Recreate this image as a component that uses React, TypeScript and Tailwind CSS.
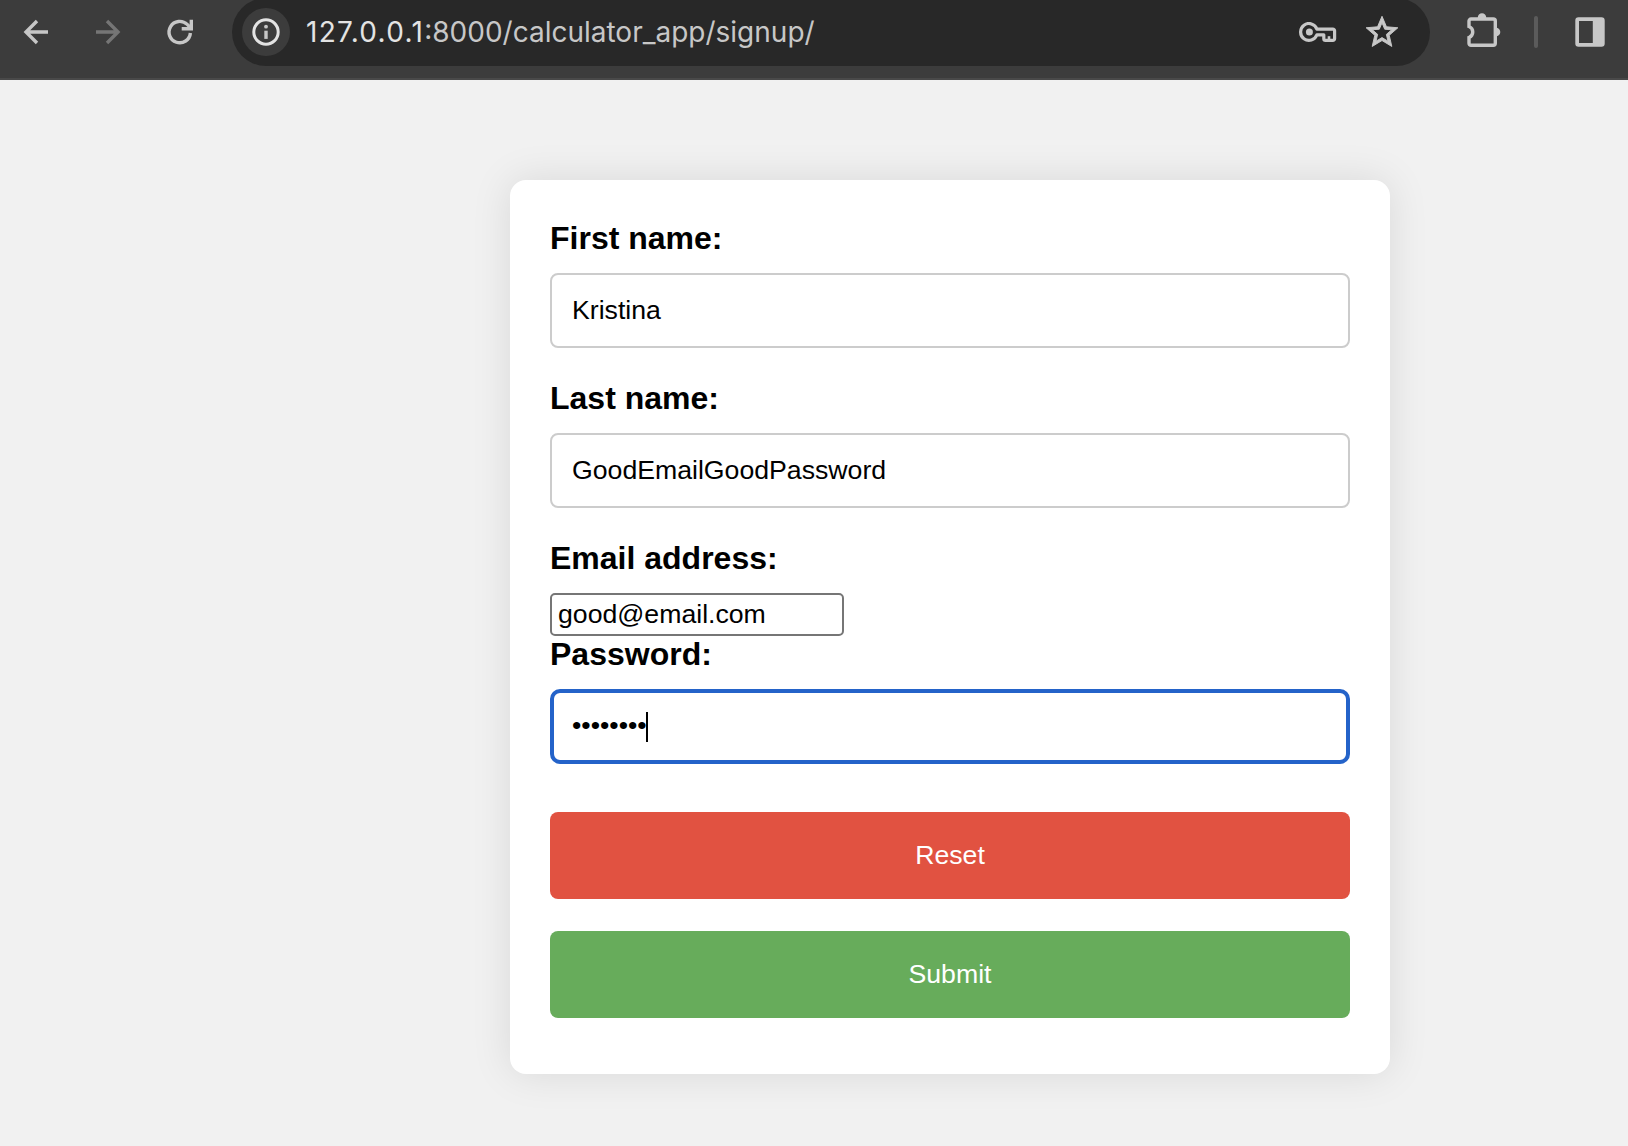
import type { ReactNode } from "react";

function BackIcon() {
  return (
    <svg className="h-9 w-9 shrink-0" viewBox="0 0 36 36" fill="none" stroke="currentColor" strokeWidth="3.4">
      <path d="M30 18H8.5M19 7 8 18l11 11" />
    </svg>
  );
}

function ReloadIcon() {
  return (
    <svg className="h-9 w-9 shrink-0" viewBox="0 0 36 36" fill="none" stroke="currentColor" strokeWidth="3.4">
      <path d="M28.4 19A10.7 10.7 0 1 1 25.2 10.4L29 14.2" />
      <path d="M29.3 5.8v9H19.7" />
    </svg>
  );
}

function InfoIcon() {
  return (
    <svg className="h-7 w-7" viewBox="0 0 28 28" fill="none">
      <circle cx="14" cy="14" r="12.2" stroke="#e3e3e3" strokeWidth="3" />
      <circle cx="14" cy="8.7" r="1.9" fill="#c7c7c7" />
      <path d="M14 12.7v8.2" stroke="#c7c7c7" strokeWidth="3.4" />
    </svg>
  );
}

function KeyIcon() {
  return (
    <svg className="h-5 w-[38px]" viewBox="0 0 38 20" fill="none" stroke="currentColor" strokeWidth="3.2" strokeLinejoin="round">
      <path d="M17.9 7.1H33.9a1.7 1.7 0 0 1 1.7 1.7v7.9a1.7 1.7 0 0 1-1.7 1.7H26.5a1.7 1.7 0 0 1-1.7-1.7v-3.9H17.9A8.4 8.4 0 1 1 17.9 7.1Z" />
      <circle cx="10.4" cy="10" r="3.5" fill="currentColor" stroke="none" />
      <path d="M30 17.8v-3.6" strokeWidth="2.6" />
    </svg>
  );
}

function StarIcon() {
  return (
    <svg className="h-10 w-10" viewBox="-0.6 -0.7 25.2 25.2" fill="currentColor" stroke="currentColor" strokeWidth="0.6">
      <path d="M22 9.24l-7.19-.62L12 2 9.190 8.630 2 9.240l5.460 4.730L5.820 21 12 17.270 18.180 21l-1.630-7.030L22 9.240zM12 15.400l-3.760 2.270 1-4.280-3.320-2.880 4.380-.38L12 6.100l1.710 4.040 4.380.38-3.320 2.880 1 4.280L12 15.400z" />
    </svg>
  );
}

function ExtensionIcon() {
  return (
    <svg className="h-[38px] w-9" viewBox="0 -1 36 38" fill="none">
      <path
        d="M5 5H27.3a2 2 0 0 1 2 2V29.3a2 2 0 0 1-2 2H5a2 2 0 0 1-2-2V23.5C8 21.500 8 14.500 3 12.500V7a2 2 0 0 1 2-2Z"
        stroke="currentColor"
        strokeWidth="3.4"
      />
      <path d="M11.7 4a4.3 4.8 0 0 1 8.6 0ZM30 13.700a4.300 4.300 0 0 1 0 8.600Z" fill="currentColor" />
    </svg>
  );
}

function PanelIcon() {
  return (
    <svg className="h-[30px] w-[30px]" viewBox="0 0 30 30" fill="currentColor">
      <path fillRule="evenodd" d="M3.5 0.3h23A3.2 3.2 0 0 1 29.7 3.5v23a3.2 3.2 0 0 1-3.2 3.2h-23A3.2 3.2 0 0 1 .3 26.500v-23A3.200 3.200 0 0 1 3.500.3ZM4 4v22h13.800V4Z" />
    </svg>
  );
}

function Toolbar() {
  return (
    <header className="flex h-20 items-start overflow-hidden border-b-2 border-[#494949] bg-[#3c3c3c] text-[#c7c7c7]">
      <div className="flex h-16 shrink-0 items-center gap-9 pl-[18px]">
        <BackIcon />
        <div className="rotate-180 text-[#757575]">
          <BackIcon />
        </div>
        <ReloadIcon />
      </div>
      <div className="-mt-0.5 ml-[34px] flex h-[68px] w-[1198px] shrink-0 items-center rounded-full bg-[#282828] pl-2.5 pr-[28px]">
        <div className="flex h-12 w-12 items-center justify-center rounded-full bg-[#3c3c3c]">
          <InfoIcon />
        </div>
        <div className="ml-4 flex-1 whitespace-nowrap font-['Inter',sans-serif] text-[28px] leading-[34px] text-[#c7c7c7]">
          <span className="tracking-[1.3px] text-[#e3e3e3]">127.0.0.1</span>:8000/calculator_app/signup/
        </div>
        <div className="flex items-center gap-[25px]">
          <KeyIcon />
          <StarIcon />
        </div>
      </div>
      <div className="flex h-16 shrink-0 items-center pl-9">
        <ExtensionIcon />
        <div className="ml-8 h-8 w-1 rounded-full bg-[#5b5b5b]" />
        <div className="ml-[37px]">
          <PanelIcon />
        </div>
      </div>
    </header>
  );
}

function Label({ children }: { children: ReactNode }) {
  return <div className="mb-4 text-[32px] font-bold leading-[37px]">{children}</div>;
}

function TextField({ children }: { children: ReactNode }) {
  return (
    <div className="mb-8 h-[75px] rounded-lg border-2 border-[#ccc] p-5 text-[26.667px] leading-[31px]">{children}</div>
  );
}

export default function App() {
  return (
    <div className="flex h-[1146px] w-[1628px] flex-col overflow-hidden bg-[#f1f1f1] font-['Liberation_Sans',Arial,sans-serif] text-black">
      <Toolbar />
      <main className="ml-[510px] mt-[100px] h-[894px] w-[880px] rounded-2xl bg-white p-10 shadow-[0_0_40px_rgba(0,0,0,0.1)]">
        <Label>First name:</Label>
        <TextField>Kristina</TextField>
        <Label>Last name:</Label>
        <TextField>GoodEmailGoodPassword</TextField>
        <Label>Email address:</Label>
        <div className="h-[43px] w-[294px] rounded-[5px] border-2 border-[#767676] px-1.5 py-1 text-[26.667px] leading-[31px]">
          good@email.com
        </div>
        <Label>Password:</Label>
        <div className="flex h-[75px] items-center rounded-[10px] border-4 border-[#2463c9] px-[18px] text-[26.667px] leading-[31px]">
          <span className="pb-0.5">••••••••</span>
          <span className="-ml-px h-[30px] w-0.5 bg-black" />
        </div>
        <button className="mt-12 block h-[87px] w-full rounded-lg bg-[#e15241] pb-0.5 text-[26.667px] text-white">Reset</button>
        <button className="mt-8 block h-[87px] w-full rounded-lg bg-[#67ac5b] pb-0.5 text-[26.667px] text-white">Submit</button>
      </main>
    </div>
  );
}
